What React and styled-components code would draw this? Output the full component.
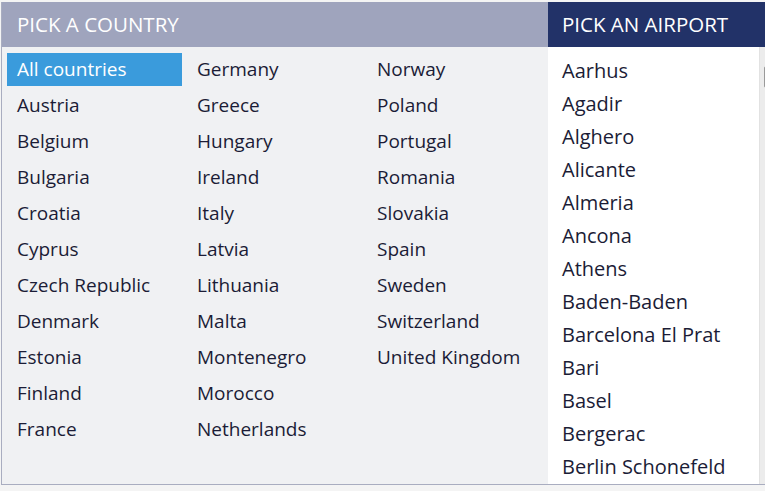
import React from "react";
import styled, { createGlobalStyle } from "styled-components";

const GlobalStyle = createGlobalStyle`
  html, body {
    margin: 0;
    padding: 0;
    overflow: hidden;
    background: #f4f4f4;
  }
  body {
    font-family: "Open Sans", "Noto Sans", sans-serif;
  }
`;

const Frame = styled.div`
  margin: 2px 0 0 1px;
  width: 780px;
  height: 482px;
  display: flex;
  overflow: hidden;
  border-left: 1px solid #a9adc0;
  border-bottom: 1px solid #a9adc0;
  background: #f0f1f3;
`;

const Panel = styled.div`
  display: flex;
  flex-direction: column;
  overflow: hidden;
  width: ${(p) => p.width}px;
  background: ${(p) => p.bg};
`;

const Header = styled.div`
  height: 45px;
  flex-shrink: 0;
  box-sizing: border-box;
  display: flex;
  align-items: center;
  padding: 0 0 2px ${(p) => p.pad}px;
  background: ${(p) => p.bg};
  color: #fff;
  font-size: 20.5px;
  font-weight: 400;
`;

const CountryGrid = styled.div`
  display: grid;
  grid-auto-flow: column;
  grid-template-rows: repeat(11, 33px);
  grid-template-columns: repeat(3, 175px);
  column-gap: 5px;
  row-gap: 3px;
  padding: 6px 0 0 5px;
`;

const Country = styled.div`
  display: flex;
  align-items: center;
  padding: 0 0 2px 10px;
  font-size: 19px;
  color: ${(p) => (p.active ? "#fff" : "#1b1c36")};
  background: ${(p) => (p.active ? "#3a9bdc" : "transparent")};
  white-space: nowrap;
  cursor: pointer;
`;

const AirportBody = styled.div`
  flex: 1;
  display: flex;
  min-height: 0;
`;

const AirportList = styled.div`
  width: 211px;
  padding: 7px 0 0 14px;
  box-sizing: border-box;
  overflow: hidden;
`;

const Airport = styled.div`
  height: 33px;
  display: flex;
  align-items: center;
  padding-bottom: 1px;
  box-sizing: border-box;
  font-size: 20px;
  color: #1b1c36;
  white-space: nowrap;
`;

const Track = styled.div`
  width: 16px;
  background: #ececec;
  border-left: 1px solid #e2e2e2;
  position: relative;
`;

const Thumb = styled.div`
  position: absolute;
  top: 19px;
  left: 4px;
  width: 9px;
  height: 20px;
  background: #f4f4f4;
  border: 1px solid #9a9a9a;
  border-radius: 2px;
`;

const countries = [
  "All countries", "Austria", "Belgium", "Bulgaria", "Croatia", "Cyprus",
  "Czech Republic", "Denmark", "Estonia", "Finland", "France",
  "Germany", "Greece", "Hungary", "Ireland", "Italy", "Latvia",
  "Lithuania", "Malta", "Montenegro", "Morocco", "Netherlands",
  "Norway", "Poland", "Portugal", "Romania", "Slovakia", "Spain",
  "Sweden", "Switzerland", "United Kingdom",
];

const airports = [
  "Aarhus", "Agadir", "Alghero", "Alicante", "Almeria", "Ancona", "Athens",
  "Baden-Baden", "Barcelona El Prat", "Bari", "Basel", "Bergerac",
  "Berlin Schonefeld",
];

export default function App() {
  return (
    <>
      <GlobalStyle />
      <Frame>
        <Panel width={546} bg="#f0f1f3">
          <Header bg="#9fa4bd" pad={15}>PICK A COUNTRY</Header>
          <CountryGrid>
            {countries.map((c, i) => (
              <Country key={c} active={i === 0}>{c}</Country>
            ))}
          </CountryGrid>
        </Panel>
        <Panel width={234} bg="#fff">
          <Header bg="#223268" pad={14}>PICK AN AIRPORT</Header>
          <AirportBody>
            <AirportList>
              {airports.map((a) => (
                <Airport key={a}>{a}</Airport>
              ))}
            </AirportList>
            <Track>
              <Thumb />
            </Track>
          </AirportBody>
        </Panel>
      </Frame>
    </>
  );
}
